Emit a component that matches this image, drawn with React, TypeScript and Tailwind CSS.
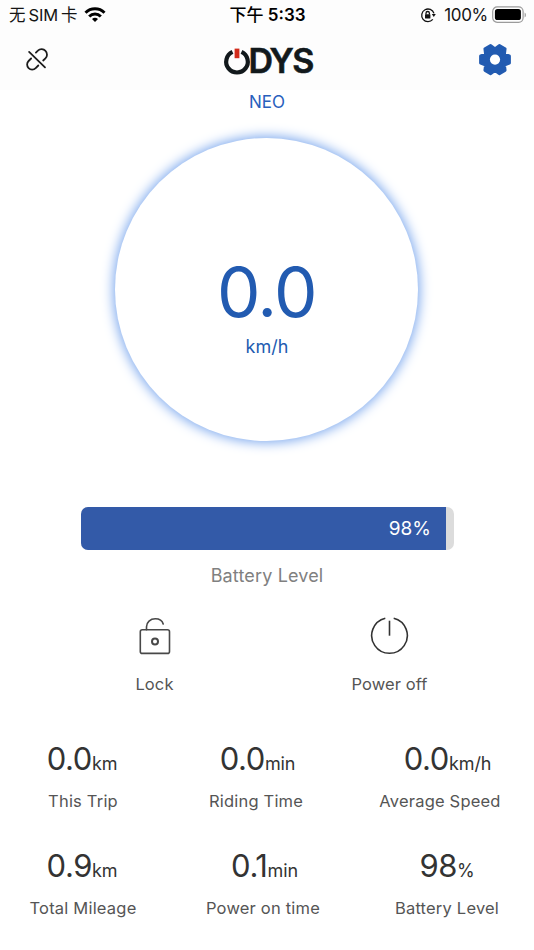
import clsx from "clsx";

type StatProps = {
  value: string;
  unit: string;
  label: string;
  className: string;
  valueClassName?: string;
};

const StatusBar = () => {
  return (
    <header className="flex h-[30px] items-center pl-[9px] pr-[7px] text-[17px] text-[#151515]">
      <div className="flex flex-1 items-center">
        <span className="whitespace-nowrap pt-[1px] text-[16.5px] tracking-[-0.2px] [word-spacing:-1.2px]">无 SIM 卡</span>
        <svg className="ml-[7px] h-[16px] w-[22px]" viewBox="0 0.5 22 16" fill="none" stroke="#000" strokeWidth="3">
          <path d="M1.5 6.2a13.6 13.6 0 0 1 19 0" />
          <path d="M5.2 10a8.2 8.2 0 0 1 11.6 0" />
          <path d="M8 12.6a4.3 4.3 0 0 1 6 0L11 15.6z" fill="#000" stroke="none" />
        </svg>
      </div>
      <span className="pt-[1px] pr-[1px] text-[17px] font-semibold text-black">
        <span className="font-medium">下午</span> 5:33
      </span>
      <div className="flex flex-1 items-center justify-end">
        <svg className="h-[16px] w-[16px]" viewBox="0 0 16 16" fill="none" stroke="#111" strokeWidth="1.3">
          <path d="M12.8 12.4A6.3 6.3 0 1 1 14 6.4" />
          <path d="M11.8 7h4L13.8 10z" fill="#111" stroke="none" />
          <rect x="5" y="7.2" width="5.4" height="4.3" rx="0.6" fill="#111" stroke="none" />
          <path d="M6 7.5V6.2a1.7 1.7 0 0 1 3.4 0v1.3" />
        </svg>
        <span className="ml-[8px] pt-[1px] text-[17px] tracking-[-0.3px]">100%</span>
        <svg className="ml-[4px] h-[18px] w-[35px]" viewBox="0 0 35 18">
          <rect x="0.7" y="0.9" width="30.4" height="15.4" rx="4.5" fill="none" stroke="#9b9b9b" strokeWidth="1.2" />
          <rect x="2.9" y="3.1" width="26" height="11" rx="2.6" fill="#000" />
          <path d="M32.6 6.4c1.8.9 1.8 4.1 0 5z" fill="#9b9b9b" />
        </svg>
      </div>
    </header>
  );
};

const Logo = () => {
  return (
    <svg className="ml-[10px] h-[34px] w-[92px] overflow-visible" viewBox="0 -2 92 34" fill="none">
      <path d="M9.5 6.9a10.8 10.8 0 1 0 9 0" stroke="#12191c" strokeWidth="4.2" />
      <rect x="11.6" y="3.6" width="4.8" height="9.6" fill="#d22c1c" />
      <text
        x="25.4 46.6 69.3"
        y="28.2"
        fill="#12191c"
        stroke="#12191c"
        strokeWidth="0.6"
        className="font-['Inter','Liberation_Sans',sans-serif] text-[34px] font-semibold"
      >
        DYS
      </text>
    </svg>
  );
};

const Navbar = () => {
  return (
    <nav className="flex h-[60px] items-center justify-between pl-[24px] pr-[22px]">
      <button type="button" aria-label="Disconnect">
        <svg className="h-[26px] w-[26px]" viewBox="0 0.5 26 26" fill="none" stroke="#1c1c1c" strokeWidth="1.8" strokeLinecap="round">
          <path d="M5.1 5.4 21 20.8" />
          <path d="M11.9 6.1l2-1.9a5.2 5.2 0 0 1 7.6.2 5.3 5.3 0 0 1-.1 7.5L19.2 14" />
          <path d="M7.1 12l-2.5 2.5a5 5 0 0 0 0 7.1 5 5 0 0 0 7.1 0l2.6-2.6" />
        </svg>
      </button>
      <Logo />
      <button type="button" aria-label="Settings">
        <svg className="h-[34px] w-[34px]" viewBox="-17 -16.6 34 34" fill="#225bb1">
          <path
            d="M14.2 -3.4V3.4L9.2 5.3L9.87 10.7L4.33 13.8L0 10.6L-4.33 13.8L-9.87 10.7L-9.2 5.3L-14.2 3.4V-3.4L-9.2 -5.3L-9.87 -10.7L-4.33 -13.8L0 -10.6L4.33 -13.8L9.87 -10.7L9.2 -5.3Z"
            stroke="#225bb1"
            strokeWidth="3.4"
            strokeLinejoin="round"
          />
          <circle r="5.1" fill="#fff" />
        </svg>
      </button>
    </nav>
  );
};

const Stat = ({ value, unit, label, className, valueClassName }: StatProps) => {
  return (
    <div className={clsx("flex flex-col items-center whitespace-nowrap", className)}>
      <p className={clsx("flex items-baseline leading-[40px] text-[#333]", valueClassName)}>
        <span className="text-[31px] tracking-[-0.4px]">{value}</span>
        <span className="text-[18px] tracking-[-0.1px]">{unit}</span>
      </p>
      <span className="mt-[5px] text-[16.5px] leading-[24px] tracking-[0.2px] text-[#555]">{label}</span>
    </div>
  );
};

const App = () => {
  const battery = 98;

  return (
    <div className="flex h-[950px] w-[534px] flex-col overflow-hidden bg-white font-['Inter','Noto_Sans_CJK_SC',sans-serif]">
      <div className="h-[90px] shrink-0 bg-[#fdfdfd]">
        <StatusBar />
        <Navbar />
      </div>

      <p className="h-[24px] text-center text-[17px] leading-[24px] text-[#2860bd]">NEO</p>

      <section className="ml-[115px] mt-[24px] flex size-[303px] shrink-0 flex-col items-center rounded-full text-[#225bb1] shadow-[0_0_12px_2px_#7faaee]">
        <span className="mt-[114px] text-[69px] leading-[80px] tracking-[-1.5px]">0.0</span>
        <span className="mt-[3px] pl-[1px] text-[18px] leading-[24px] tracking-[0.1px]">km/h</span>
      </section>

      <div className="mx-auto mt-[66px] h-[43px] w-[373px] shrink-0 overflow-hidden rounded-[7px] bg-[#dcdcdc]">
        <div
          className="flex h-full items-center justify-end bg-[#335aa8] pr-[15px] pt-[2px] text-[19px] text-white"
          style={{ width: `${battery}%` }}
        >
          {battery}%
        </div>
      </div>
      <p className="mt-[13px] text-center text-[18px] leading-[26px] tracking-[0.15px] text-[#808080]">Battery Level</p>

      <div className="mt-[25px] flex h-[84px] shrink-0 pl-[37px] pr-[27px]">
        <button type="button" className="flex flex-1 flex-col items-center">
          <svg className="h-[42px] w-[36px]" viewBox="0 0 36 42" fill="none" stroke="#484848" strokeWidth="1.6">
            <rect x="3.3" y="15.8" width="29.2" height="23.6" rx="2" />
            <path d="M9.5 15.8V12.8c0-4.6 3.8-8 8.8-8 4 0 7 2 7.9 5.2" strokeLinecap="round" />
            <circle cx="18" cy="27.6" r="3" strokeWidth="2" />
          </svg>
          <span className="mt-[16px] text-[16.5px] leading-[24px] tracking-[0.1px] text-[#555]">Lock</span>
        </button>
        <button type="button" className="flex flex-1 flex-col items-center">
          <svg className="h-[42px] w-[40px]" viewBox="0.7 0.3 40 42" fill="none" stroke="#333" strokeWidth="1.6">
            <path d="M16 4.5a17.8 17.8 0 1 0 8.4 0" />
            <path d="M20.2 7v15" />
          </svg>
          <span className="mt-[16px] text-[16.5px] leading-[24px] tracking-[0.1px] text-[#555]">Power off</span>
        </button>
      </div>

      <section className="mt-[41px] flex flex-col gap-[38px]">
        <div className="flex h-[69px]">
          <Stat value="0.0" unit="km" label="This Trip" className="w-[166px]" valueClassName="pr-[2px]" />
          <Stat value="0.0" unit="min" label="Riding Time" className="w-[180px]" valueClassName="pl-[3px]" />
          <Stat value="0.0" unit="km/h" label="Average Speed" className="w-[188px]" valueClassName="pl-[15px]" />
        </div>
        <div className="flex h-[69px]">
          <Stat value="0.9" unit="km" label="Total Mileage" className="w-[166px]" valueClassName="pr-[2px]" />
          <Stat value="0.1" unit="min" label="Power on time" className="w-[194px]" valueClassName="pl-[3px]" />
          <Stat value="98" unit="%" label="Battery Level" className="w-[174px]" />
        </div>
      </section>
    </div>
  );
};

export default App;
